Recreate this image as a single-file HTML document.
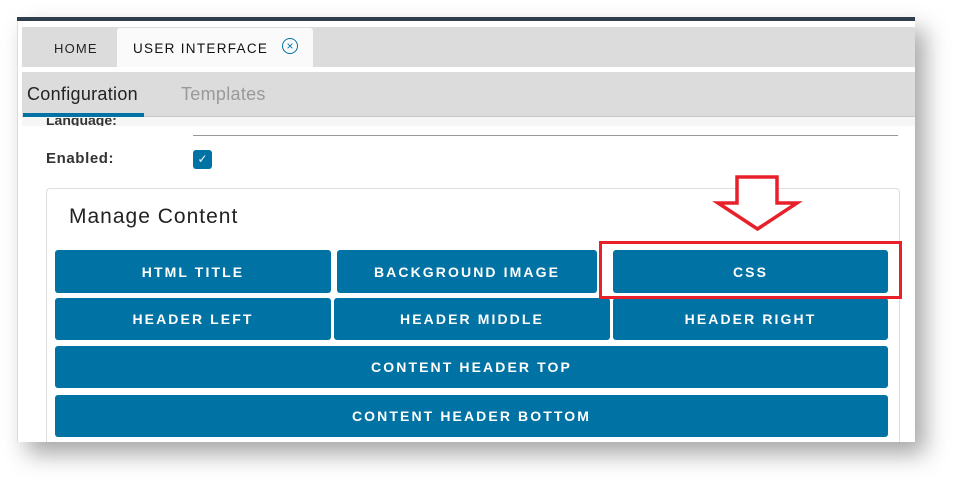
<!DOCTYPE html><html><head><style>
body{margin:0;width:963px;height:491px;background:#fff;position:relative;overflow:hidden;font-family:"Liberation Sans",sans-serif}
.frame{position:absolute;left:17px;top:17px;width:898px;height:425px;background:#fff;box-shadow:10px 12px 22px rgba(0,0,0,.35);overflow:hidden}
.a{position:absolute}
.btn{position:absolute;background:#0072a3;color:#fff;border-radius:3px;font-weight:bold;font-size:14px;letter-spacing:2.1px;display:flex;align-items:center;justify-content:center}
</style></head><body>
<div class="frame">
<div class="a" style="left:0;top:0;width:1px;height:425px;background:#ddd"></div>
<div class="a" style="left:0;top:0;width:898px;height:4px;background:#2f3d4c"></div>
<div class="a" style="left:5px;top:10px;width:893px;height:40px;background:#dcdcdc"></div>
<div class="a" style="left:37px;top:24px;font-size:13px;letter-spacing:1.2px;color:#222">HOME</div>
<div class="a" style="left:100px;top:11px;width:196px;height:39px;background:#fafafa;border-radius:3px 3px 0 0"></div>
<div class="a" style="left:116px;top:24px;font-size:13.5px;letter-spacing:1.3px;color:#111">USER INTERFACE</div>
<div class="a" style="left:265px;top:21px;width:14px;height:14px;border:1.3px solid #0072a3;border-radius:50%;color:#0072a3;font-size:12px;line-height:14px;text-align:center">×</div>
<div class="a" style="left:5px;top:55px;width:893px;height:44px;background:#dcdcdc;border-bottom:1px solid #c8c8c8"></div>
<div class="a" style="left:10px;top:67px;font-size:18px;letter-spacing:0.3px;color:#222">Configuration</div>
<div class="a" style="left:164px;top:67px;font-size:18px;letter-spacing:0.3px;color:#999">Templates</div>
<div class="a" style="left:6px;top:96px;width:121px;height:4px;background:#0072a3"></div>
<div class="a" style="left:5px;top:100px;width:893px;height:9px;background:#f6f6f6"></div>
<div class="a" style="left:29px;top:101px;font-size:14px;font-weight:bold;color:#333;height:8px;overflow:hidden;line-height:4px">Language:</div>
<div class="a" style="left:176px;top:118px;width:705px;height:1px;background:#999"></div>
<div class="a" style="left:29px;top:133px;font-size:15px;letter-spacing:0.6px;font-weight:bold;color:#333">Enabled:</div>
<div class="a" style="left:176px;top:133px;width:19px;height:19px;background:#0072a3;border-radius:3px;color:#fff;font-size:12px;text-align:center;line-height:19px">✓</div>
<div class="a" style="left:29px;top:171px;width:852px;height:290px;border:1px solid #ddd;border-radius:4px"></div>
<div class="a" style="left:52px;top:188px;font-size:21px;letter-spacing:1px;color:#222">Manage Content</div>
<div class="btn" style="left:38px;top:233px;width:276px;height:43px">HTML TITLE</div>
<div class="btn" style="left:320px;top:233px;width:260px;height:43px">BACKGROUND IMAGE</div>
<div class="btn" style="left:596px;top:233px;width:275px;height:43px">CSS</div>
<div class="btn" style="left:38px;top:281px;width:276px;height:42px">HEADER LEFT</div>
<div class="btn" style="left:317px;top:281px;width:276px;height:42px">HEADER MIDDLE</div>
<div class="btn" style="left:596px;top:281px;width:275px;height:42px">HEADER RIGHT</div>
<div class="btn" style="left:38px;top:329px;width:833px;height:42px">CONTENT HEADER TOP</div>
<div class="btn" style="left:38px;top:378px;width:833px;height:42px">CONTENT HEADER BOTTOM</div>
<div class="a" style="left:582px;top:224px;width:297px;height:52px;border:3.5px solid #e8202a"></div>
<svg class="a" style="left:690px;top:150px" width="100" height="70"><path d="M30 10H70V36H90L50.5 62L11 36H30Z" fill="#fff" stroke="#e8202a" stroke-width="3.5" stroke-linejoin="miter"/></svg>
</div>
</body></html>
